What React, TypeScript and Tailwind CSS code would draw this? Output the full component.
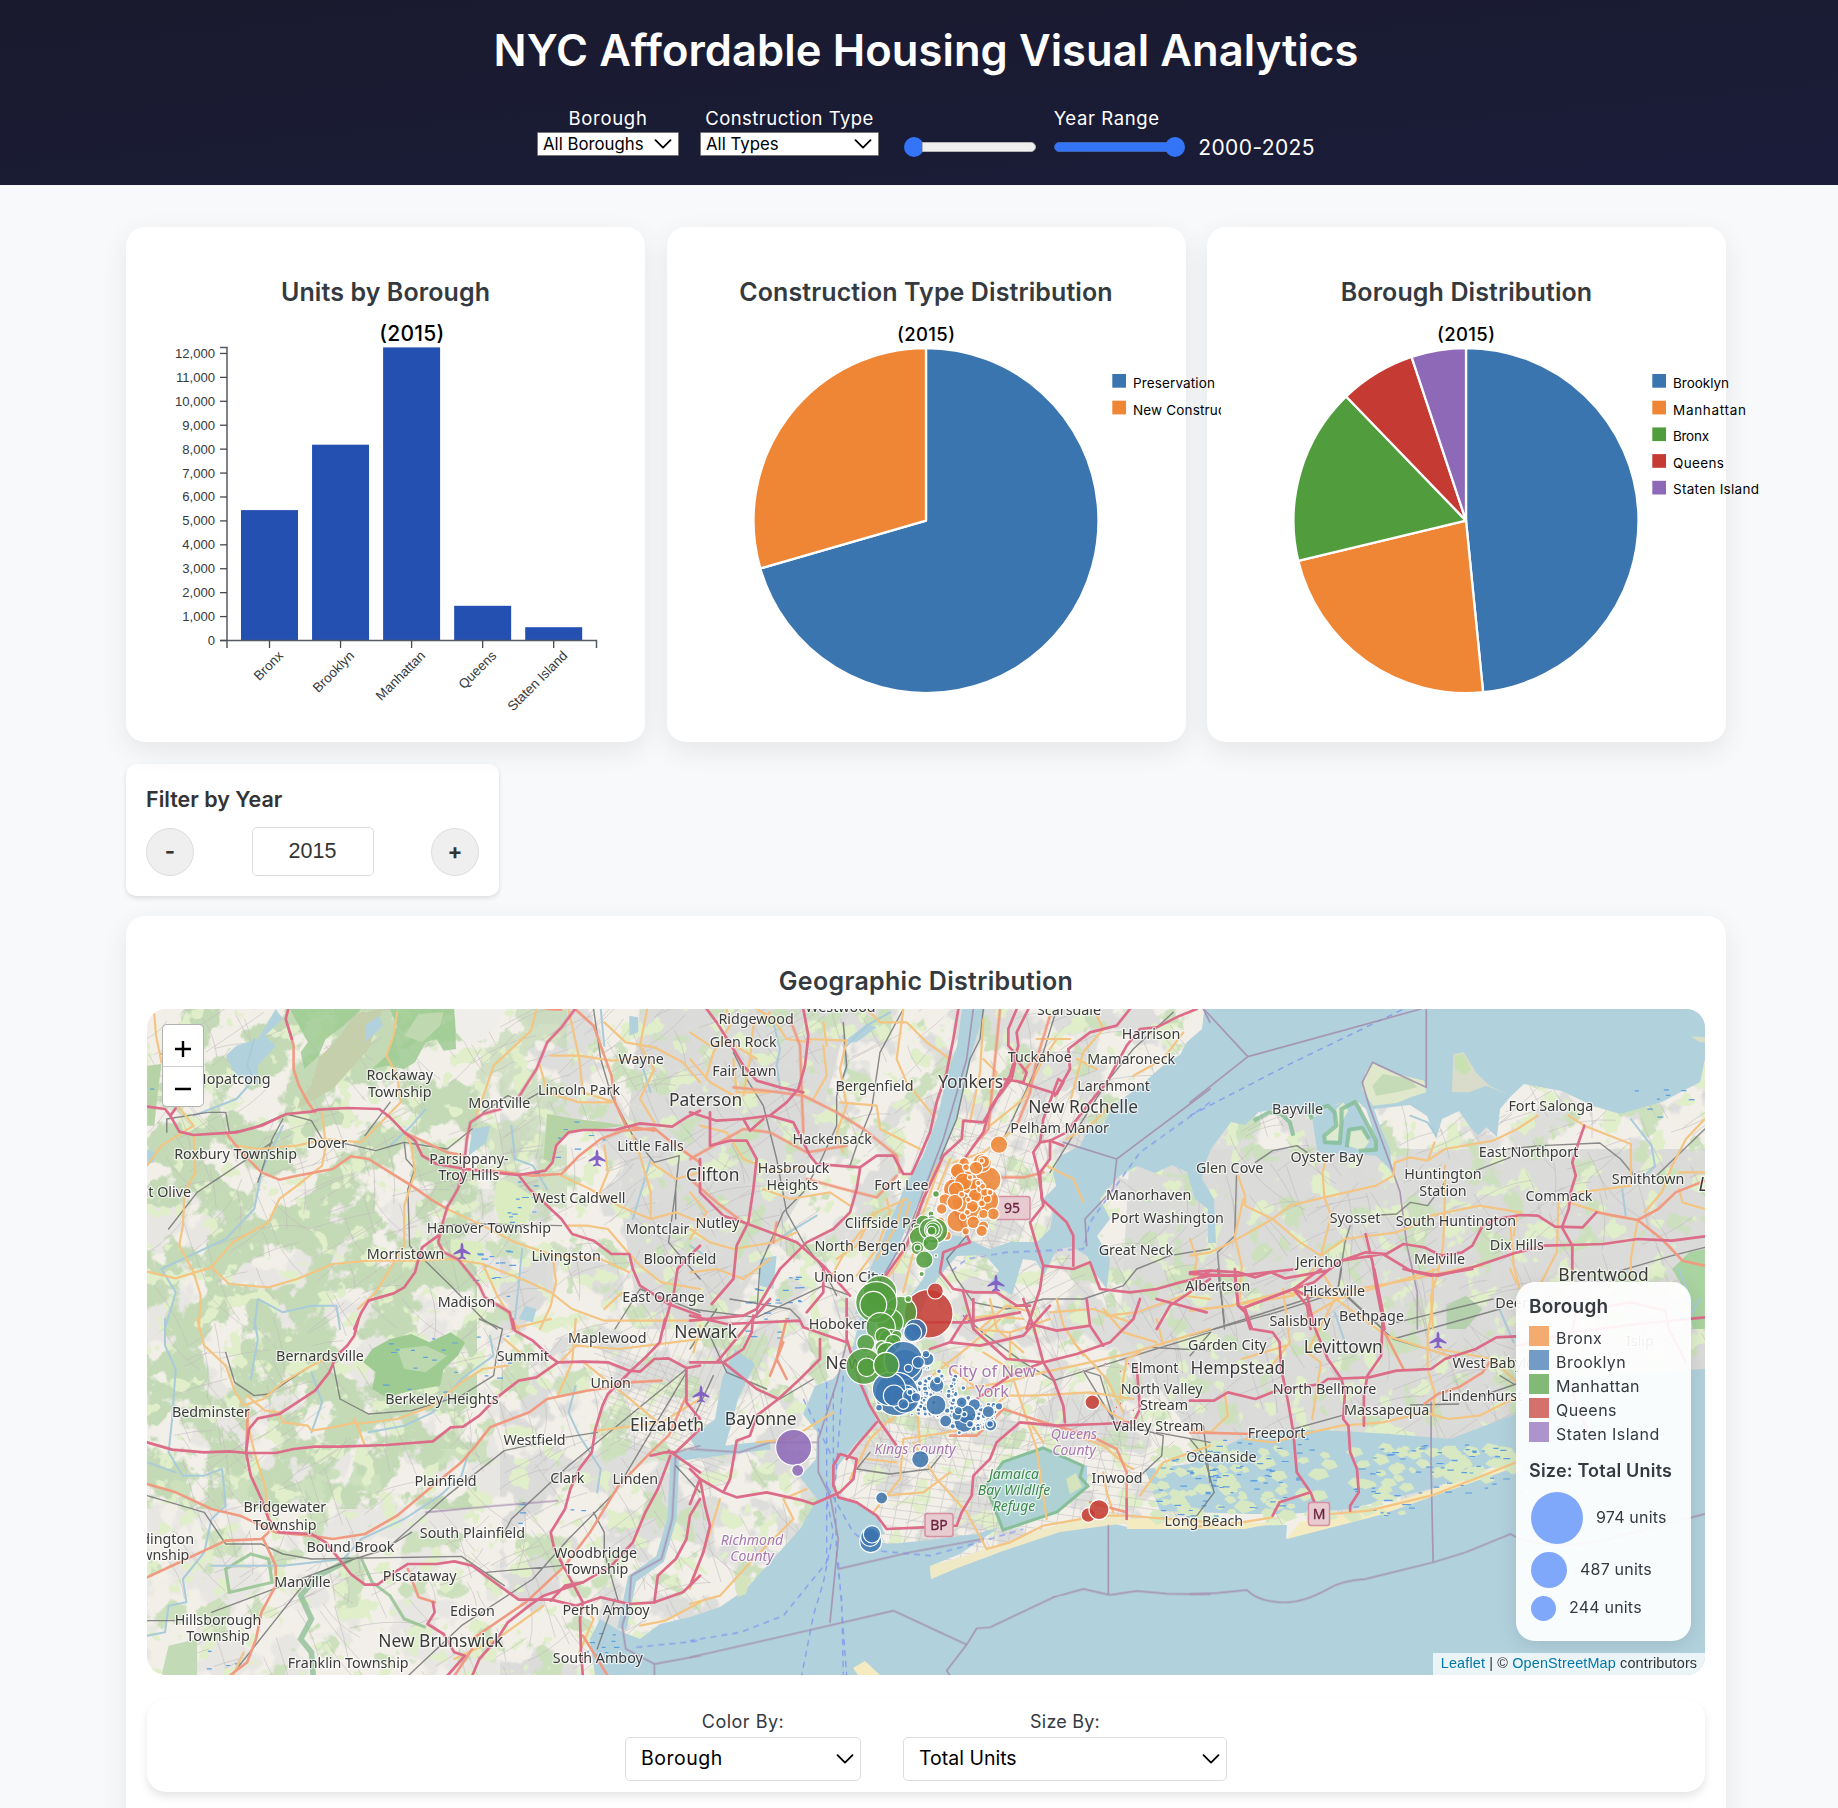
import React from "react";

type Section = "nw" | "sw" | "n" | "s" | "ne" | "se";
type Paths = [Section, string][];

const ORIGIN: Record<Section, string> = {
  nw: "translate(140 960) scale(.357143 .333333)",
  sw: "translate(140 1320) scale(.357143 .333333)",
  n: "translate(690 960) scale(.333333)",
  s: "translate(690 1300) scale(.333333)",
  ne: "translate(1190 960) scale(.344388 .333333)",
  se: "translate(1190 1270) scale(.344388 .333333)",
};

const motorways: Paths = [
  ["nw", "M415 150L408 180L425 240"],
  ["nw", "M20 443L70 450L85 470L110 518L150 528L210 524L270 520L340 500L410 465L480 458L500 452L580 447L670 450L700 475L740 520L770 545L790 590L830 615L910 630L1000 642L1060 648L1135 635L1155 610L1165 560L1200 520L1240 513L1330 513L1400 493L1490 503L1530 475L1568 455"],
  ["nw", "M1218 150L1180 205L1140 250L1110 330L1080 380L1060 415M1010 450L960 465L925 490L915 540L910 590L905 640L890 690L860 745L845 800L835 850L850 880L890 900L920 940L950 980L965 1015L1035 1060L1045 1110"],
  ["nw", "M835 830L790 865L780 900L770 940L740 985L710 1003L640 1025L620 1060L600 1110"],
  ["nw", "M1060 648L1090 690L1130 730L1180 780L1210 825L1270 845L1320 885L1370 885L1380 930L1400 980L1480 1035L1568 1070M1568 860L1530 900L1505 930L1495 1000L1465 1110"],
  ["nw", "M85 470L100 448"],
  ["sw", "M612 0L600 50L580 80L550 110L530 160L490 215L440 250L390 285L330 298L305 330L297 400L310 470L340 540L360 600L390 640L480 645L520 670L550 710L590 765L630 797L665 797L720 755L750 735L830 735L880 727L930 740L980 780L1060 842L1150 842L1220 860L1290 835L1370 855L1440 850L1520 820L1568 770"],
  ["sw", "M20 370L90 392L180 400L250 397L300 402L380 402L430 390L490 383L560 383L690 378L820 367L870 325L905 323L950 290L1000 235L1060 185L1110 175L1170 130L1240 128L1310 130L1370 155L1400 158L1440 120L1480 118L1530 147L1568 140"],
  ["sw", "M1043 0L1050 35L1100 65L1150 115L1170 130M1470 0L1455 70L1420 110L1380 150L1310 225L1295 260L1275 330L1265 400L1230 450L1205 510L1190 570L1150 640L1160 690L1190 750L1215 800L1240 850L1232 900L1235 1000L1240 1071"],
  ["sw", "M1568 330L1500 400L1470 400L1430 410M1485 410L1450 510L1415 580L1380 670L1320 740L1240 790L1130 830L1090 860L1030 910L1000 960L950 1020L930 1071M1568 540L1540 590L1530 660L1500 720L1450 770L1440 850M820 850L825 880L805 915L850 945L880 1000L910 1010L860 1071M1530 150L1530 250L1568 300"],
  ["sw", "M1150 845L1190 800L1240 790M1480 395L1568 460"],
  ["n", "M50 150L80 190L130 270L160 320L200 365L270 385L340 400M340 150L355 230L345 320L325 390L290 430L240 470L160 480L80 485L0 460M240 470L310 490L340 550L360 590L380 615L440 620L510 625L560 590L610 590L640 645L665 645L690 590L720 520L740 430L770 340L790 240L805 150"],
  ["n", "M510 630L500 690L480 760L430 810L350 850L270 930L200 1050L160 1070L0 1085M30 600L30 700L100 770L160 790L240 820L320 850L400 920L480 1010M400 920L400 1000L350 1060M60 460L60 560L120 545L170 545L200 600L190 690L175 790L140 860L130 960L65 1035M160 480L180 515L220 480"],
  ["n", "M980 150L955 210L955 260L980 290L965 360L920 420L880 490L820 485L815 540L760 590L700 720L650 860L580 960M1015 150L980 220L985 260L960 350L900 450L880 520L830 590L790 650L770 700L840 850L810 860L760 880L750 940L790 990L850 1000L920 1000L980 1040L1020 1040M990 370L1100 405L1120 370L1105 360L1060 480L1050 550L1080 545L1120 560M1050 550L1030 580L1045 640L1060 740L1020 790L1040 860L1060 920L1150 930L1200 910L1230 990L1320 1000L1400 990L1470 970L1560 950"],
  ["n", "M940 360L1000 370L1010 340L970 290M1135 270L1140 330L1095 410M1135 270L1200 220L1280 200L1320 150M1520 150L1470 170L1400 205L1350 210L1310 260L1250 370L1200 430L1130 520L1080 545L1080 600L1050 640L1055 720L1130 790L1150 830L1150 920M820 1000L850 1110M1060 920L1050 990L1010 1110M1400 1110L1440 1040L1560 960M700 1090L830 1090L990 1060"],
  ["s", "M0 50L110 75L330 65L340 85L470 130M0 190L100 190L160 150L185 100L190 50M390 120L390 180L330 240L265 300L200 270L100 190M240 0L180 70L80 190M265 300L200 350L180 410L140 425L120 540L100 580L30 540L0 510M100 580L140 595L230 580L340 605L370 615L450 580L490 540L500 480L450 465L430 500L430 560L445 595L500 610L560 650L590 690L700 685L800 680L815 640L845 590L850 530L900 480L920 430L990 370L1100 380L1230 375L1330 370"],
  ["s", "M470 0L470 120L510 250L540 320L570 370L620 440M560 370L500 440L470 480M850 0L850 90L950 180L1060 190L1160 165L1260 130L1330 60L1350 0M780 130L870 140L1000 110L1080 20M1190 0L1200 80L1240 140M1000 0L1030 80L1060 190L1090 240L1120 320L1125 370M1310 600L1310 660M0 860L40 760L60 680L45 620L30 540L0 615M1550 40L1400 0M720 150L780 130L830 50"],
  ["s", "M1020 75L1100 95L1200 80M1330 370L1350 330L1340 200M860 300L960 230L1060 190"],
  ["ne", "M0 940L60 935L140 940L190 955L235 940L275 958L400 935L440 905L510 880L570 885L620 855L680 865L730 890L790 880L820 860L850 800L890 780L960 768L1010 770L1060 803L1140 805L1180 760M440 905L560 885L640 935L720 950L820 925L950 880L1030 860L1100 858L1200 855L1300 840L1400 845L1495 832M1145 500L1125 560L1110 610L1120 650L1105 700L1100 750L1080 805L1110 860L1110 960M510 825L530 910L540 980L565 1110M20 960L60 935M40 950L130 950L140 1040L160 1060L175 1110M160 1045L300 990L360 970L400 935M300 990L340 1040L350 1110"],
  ["se", "M0 15L140 20L310 0M130 0L140 110L160 120L180 180L240 190L260 220L265 300L285 400L300 490L310 610L350 670L365 710M160 115L300 60L380 0M300 60L340 80L360 170L400 270L440 330L450 370L445 450L460 470L465 550L485 600L490 670L465 710L465 725M535 0L560 130L555 260L515 320L505 380L505 470M0 395L70 395L110 370L190 390L250 365L380 345L400 330L520 325L600 305L700 300L740 270L830 240L890 205L947 202M350 670L260 700L240 740M620 0L700 20L820 0M1110 190L1120 130L1280 100L1380 125L1390 180L1440 280M1100 330L1120 400L1160 500M950 230L1110 190L1300 165L1495 145"],
];

const primaries: Paths = [
  ["nw", "M420 220L430 260L430 330L445 380L470 430L490 460M240 520L280 575L340 640L390 662L440 650L540 630L590 592L640 600L700 640L760 680L820 725L860 750M740 520L800 550L860 580L910 590M910 630L1000 637L1100 650L1180 645L1230 590L1290 540L1350 515L1440 508L1500 560L1568 610M1218 150L1270 200L1300 290L1320 350L1330 430L1360 500L1440 515M1140 150L1180 152"],
  ["sw", "M20 495L100 520L200 570L280 590L340 620L380 640L480 650L540 660L630 645L720 590L820 500L900 430L940 380L980 325L1040 300L1090 280L1140 240L1250 215L1320 205L1370 190L1460 185M20 775L100 735L240 665L340 660L360 640M345 660L380 740L380 800L340 880L325 960L300 1030L250 1071M750 750L780 835L825 850M930 960L1080 850L1190 740L1260 640L1340 500L1430 400L1480 350L1530 230M880 1071L930 990M1240 950L1310 1071M297 400L302 270"],
  ["n", "M300 180L330 260L335 400L340 520M130 385L230 395L340 410L440 460L520 510L620 590L630 640M0 600L160 510L240 520L350 580L470 560M0 660L80 730L160 790M350 660L460 690L560 715L620 650M930 150L915 300L895 510L850 560M930 655L1000 655L1060 640M1030 300L1000 340M1080 170L1040 300L1020 400L980 500M250 850L260 790"],
  ["s", "M780 410L860 410L940 330L1060 370L1200 410L1280 450L1310 520L1310 600M240 230L280 130M1200 610L1310 640M290 60L260 180L290 240"],
  ["ne", "M1180 760L1300 783L1360 750L1410 700L1495 665M1300 783L1370 840L1430 905L1495 920"],
  ["se", "M565 190L620 300M680 405L720 375L780 355L850 310L870 280M0 490L180 495"],
];

const secondaries: Paths = [
  ["nw", "M40 165L45 230L60 310M150 500L60 560L20 620M150 500L120 460L100 430M150 530L155 640L125 700L120 800L110 860L150 940L170 1010L165 1110M20 938L100 958L200 925L260 850L360 790L390 720L440 680L510 620L520 560L510 460M200 925L250 975L360 985L440 960L540 915L640 905L780 905M720 160L710 230L690 290L720 350L730 430L620 550L520 540L440 560L330 570L270 560M740 520L760 560L770 640L740 740L740 860L660 1000L610 1050M1110 150L1095 215L1050 260L990 320L965 400L940 470M1200 150L1230 300L1240 400L1330 430M1300 190L1360 250L1440 265L1520 310L1568 370M1150 290L1230 290L1320 305L1420 295M1120 320L1140 400L1230 430L1320 430M870 900L960 915L1080 965L1150 1000L1210 1050L1300 1085L1420 1085L1568 1085M860 750L960 800L1050 850L1160 890L1290 900L1370 940M1180 650L1260 690L1340 740L1430 780L1430 700L1400 590L1380 530M1200 800L1250 800L1310 810L1350 860L1400 920L1460 970L1568 990M1155 890L1165 970L1150 1040L1120 1110M960 915L1000 1010L1060 1110"],
  ["nw", "M1420 150L1400 260L1440 330L1400 420L1440 490M1300 560L1310 640L1280 720M1430 780L1500 760L1568 790M1350 1000L1300 1050M780 905L880 900M1430 610L1500 660L1568 640"],
  ["sw", "M160 0L180 80L240 140L265 215L290 260L345 240L400 190L480 140L520 120M300 230L350 275L390 280L400 310L470 320L480 335L540 325L605 310L630 380M605 315L720 300L820 260L900 190L960 150L1030 140M630 380L600 300M300 300L320 400L350 500L360 600M1020 60L1080 115M1040 30L1150 0M1180 125L1220 80L1340 90L1568 60M1240 128L1360 230L1450 310M1280 335L1460 310L1568 240M1240 860L1270 900L1230 1000M1400 920L1470 905L1568 850M880 1020L1000 960L1130 860M1550 100L1568 20M290 1000L260 1071M1220 0L1210 130L1170 230"],
  ["n", "M110 150L120 200L70 280L50 350M130 300L140 400L240 400M240 160L190 200L180 300L160 410M350 240L470 245L450 330L470 440L440 520L460 580M450 430L560 440L570 510L690 570M530 150L570 190L650 190L710 250L780 300M640 150L620 300L650 370L730 470M0 300L60 370L150 420M400 260L410 350L370 420M0 810L60 850L130 870L250 850L320 820M0 700L50 760L0 840M590 720L600 760L560 870L500 950M660 730L640 800M650 720L560 760L470 870L420 960M880 180L870 340L840 490M1100 240L1060 300L1000 420L900 500M1040 240L1140 240M960 520L880 580L790 610M1070 620L1150 660L1180 730M1130 540L1200 500L1260 440M1210 150L1240 210L1180 280L1140 430M760 590L700 760L640 1000M780 600L740 700M1250 1070L1340 1060L1480 1010L1560 1020M1080 1060L1210 1050L1320 1090M870 1110L950 1040L1030 1060M1480 220L1420 300L1330 350M200 150L250 180L290 240L360 250"],
  ["n", "M0 220L60 260L120 250L200 300M30 500L110 520L160 600L260 640L340 620M220 690L300 720L420 700L480 740M640 720L620 800L560 900M680 800L620 920L560 1000M740 620L690 740M0 940L80 930L160 960L240 900M400 190L410 260M550 760L500 860L440 900M880 300L920 340L900 400M1160 300L1220 330"],
  ["s", "M1560 90L1330 160L1200 190L1060 220L940 250L820 270M640 420L740 405L830 390L950 290L1030 290L1200 280L1330 300M850 90L960 100L1080 60M880 160L960 210L1000 330L1040 450L1070 660M550 640L630 540L640 420M670 430L740 540L830 640L890 750M580 590L700 580L780 520M1270 640L1250 580L1240 520M890 750L960 730L1060 680L1230 650L1310 650L1560 670M1350 590L1420 490L1560 440M1060 430L1020 370M350 570L280 600L310 660L190 780L90 890L0 915M0 870L60 700L90 600M430 340L300 420L200 430M600 360L540 420L480 540M1160 410L1240 440L1310 500L1330 510M760 190L850 260M1200 280L1260 340L1330 380M1290 300L1310 180L1350 160M930 60L840 140L700 250L600 370M1150 130L1250 240L1300 340"],
  ["s", "M900 0L920 90L1000 160M1100 0L1120 80L1180 170M960 100L960 180M680 320L690 440M830 60L900 50L1000 60M1240 30L1300 100L1400 130M1400 60L1420 140M620 60L600 150L560 240M530 480L620 490"],
  ["ne", "M0 890L60 880L120 850L240 780L290 740L390 715L540 680L590 650L595 610L640 595L690 605L740 570L880 545L950 510L1010 470M390 715L385 640L395 600M390 715L410 770L380 890L450 840L600 820L650 800L700 770L840 740L960 760M140 650L160 710L160 740L240 780L320 850L380 890M155 720L130 830L150 920L145 1020M690 605L710 550M740 620L740 730L735 860L720 940L700 1010L705 1110M390 950L430 1020L330 1080M0 1055L120 1040L300 1010L380 900M430 1000L650 960L780 930L850 920M930 800L940 920L960 1000M1070 730L1065 880L1020 970M1100 730L1220 770L1300 783L1280 900L1280 960M950 760L940 830M1145 500L1280 555L1280 680L1130 700M1145 500L1100 470M1495 480L1440 540L1400 620L1370 700L1320 760M1420 640L1495 640M1420 690L1430 730L1495 750M0 840L20 900L10 960"],
  ["se", "M0 125L120 110L270 70L430 90L560 50L720 0M430 70L410 110L380 170L340 250L380 280L355 450M270 60L290 220L230 300M410 80L570 200L690 240L750 260M705 0L705 100L690 200L690 300L710 370L705 440M0 480L60 490L110 440L100 370M160 510L240 520L350 490L440 470L560 460L680 430L750 450L840 440L947 385M0 775L150 760L240 745M410 735L520 725L700 680L850 620L947 580M280 230L150 270M720 240L880 270L947 340M930 0L947 40"],
];

const rails: Paths = [
  ["nw", "M75 520L75 480L190 460L240 460L250 520M250 520L310 510L410 465L480 485L510 540L600 560L660 575L740 550L745 600L770 630L750 690L755 860L870 980L960 1080L1000 1110M80 810L160 700L370 550M330 670L370 540L400 480M740 550L860 570L930 510M960 460L1030 410L1070 430L1120 400M1270 150L1290 300L1320 410L1380 530L1440 610L1510 590L1500 690L1480 850L1568 960M840 800L950 795L1180 800M1500 690L1500 780M630 530L700 430M1330 1110L1400 990L1568 1060"],
  ["sw", "M240 100L265 190L320 230L360 225L450 160L480 140M540 130L560 240L640 285L760 275L900 230L990 170L1000 100L1015 30L950 0M20 530L180 580L240 675L340 675L400 705L480 720L900 712L1020 800M200 880L400 800L600 720L690 690L860 530L1020 395L1190 355M255 1071L440 820L480 770M750 1071L900 920L1100 780L1200 660L1330 520L1530 160M1020 640L1040 600L1200 440L1530 150M760 640L700 680M1270 580L1300 640L1300 700L1340 850M970 760L1180 740M1280 990L1330 840M20 905L100 905M1190 355L1280 340M1500 440L1568 520"],
  ["n", "M130 280L170 360L220 440L260 600L290 760L340 850L400 930L440 1010M460 190L470 320L440 410L440 500L390 610L340 700L280 760L210 920L200 1070M640 150L570 280L545 450L500 560L480 620M880 150L870 240L840 300L800 480L750 600M1100 150L1060 280L1010 390L940 540M1450 160L1330 270L1250 370L1130 560L1080 640M830 830L770 900L800 960L850 1030L950 1050L1060 1020L1180 1020L1300 980L1340 930L1440 890L1560 870M0 1050L200 1075L400 980L480 1010"],
  ["s", "M820 50L890 110L1000 190L1090 245L1560 100M1380 145L1560 155M1180 215L1280 380M1180 215L1230 230L1270 360M540 460L500 510L600 525L720 510L760 460M1280 380L1350 390L1420 410L1415 470L1340 540M1540 380L1560 550M70 230L0 380M0 150L80 30M370 240L270 300M60 110L110 220L230 270M1400 400L1560 430M120 0L300 30L330 60"],
  ["ne", "M190 610L240 575L310 560L340 580M135 650L130 830L80 880L100 1110M830 635L930 595M740 670L690 740L640 730L600 765L550 768M465 800L450 850L430 985M920 570L1020 560L1190 552L1250 600L1290 650M1350 655L1495 510M70 1110L340 1020L430 985L560 1110M1250 935L1400 890L1495 865M600 1090L880 1020"],
  ["se", "M0 200L250 130L400 80M0 260L60 190M430 60L590 210L900 120M590 210L770 265M900 320L940 345M300 480L440 440M640 408L780 405M820 390L947 345M0 510L40 560L70 670L20 740M80 0L100 160M440 0L430 60"],
];

const streams: Paths = [
  ["nw", "M320 240L300 320L320 360L270 420L150 470M400 500L340 640L320 750L240 840L60 930L100 1000L70 1110M800 450L760 500L700 560M1040 500L1050 600L1100 620L1140 690M1430 600L1380 780M560 1110L550 1040L480 1040L400 1060L330 1020L320 1110M1070 870L1060 980L1050 1080M1400 300L1430 400M1290 150L1300 260"],
  ["sw", "M70 0L70 80L100 150L90 300L80 400L120 470L180 470L230 450L240 560L200 600L180 700L120 780L130 850L80 860L70 940L20 950M320 0L330 60L310 180M980 50L990 110L900 180L820 280L740 320L640 340M920 400L900 470L840 530L740 600L620 660L570 720L400 740L200 740M1220 200L1200 280L1230 350L1290 450L1280 520M20 430L100 460M480 160L510 250L480 340"],
  ["n", "M250 190L270 270L260 320L270 380M460 230L470 330L440 400M470 260L530 200L600 160M380 770L330 800L250 850M0 860L60 900M820 650L850 700"],
  ["ne", "M640 470L690 490L715 530M1280 480L1340 560L1350 620L1310 660M1255 690L1265 770M1420 930L1460 1040"],
  ["se", "M890 100L940 220M420 130L450 220M1480 90L1440 170"],
];

const borders: Paths = [
  ["n", "M850 150L830 300L760 540L650 830L540 1020M1540 150L1560 190M1560 390L1280 600L1270 690L1185 780L1190 860M1280 600L1120 550"],
  ["s", "M470 130L440 250L385 420L385 520L420 590L445 720L420 970M0 1075L330 1000L610 935L830 1037L860 988L900 985L1090 895L1180 870L1260 888L1340 876L1430 884L1560 886M830 1037L770 1115L780 1130M445 810L660 760L880 720M1255 680L1255 885M0 450L150 460L240 430L380 430"],
  ["ne", "M40 150L168 293L670 150M168 293L0 430M686 150L686 385L530 310L500 370L520 440L555 540L580 610L610 700L630 860L660 1000L660 1110"],
  ["se", "M700 400L700 600L706 880M0 975L80 972L165 963Q200 1000 275 1000Q330 1000 400 960Q440 935 510 930L706 880L800 850L930 795L960 810Q1090 850 1250 800L1495 735"],
  ["sw", "M1568 380L1500 400L1490 600L1460 720L1375 770L1370 850L1350 920L1360 990L1440 1035L1568 1010M800 580L1000 560L1170 545M1440 1040L1440 1071"],
];

const ferries: Paths = [
  ["s", "M410 250L410 790L280 950L150 1000L0 1025M430 280L430 560L410 600L430 700L400 850L370 950L335 1130M460 230L435 560L440 780L455 900L460 1130M410 560L490 700L560 755L720 770L830 740L1000 690M445 790L470 1130M340 300L440 500"],
  ["n", "M1560 430L1350 580L1200 790L1180 870L950 880L830 900L780 940"],
  ["ne", "M0 470L280 320L500 210L620 150"],
  ["sw", "M1390 985L1568 965"],
];

function Lines({ data, stroke, width, dash, opacity = 1 }: { data: Paths; stroke: string; width: number; dash?: string; opacity?: number }) {
  return (
    <g fill="none" stroke={stroke} strokeWidth={width} strokeDasharray={dash} strokeLinejoin="round" strokeLinecap={dash ? "butt" : "round"} opacity={opacity}>
      {data.map(([section, d], i) => (
        <path key={i} d={d} transform={ORIGIN[section]} vectorEffect="non-scaling-stroke" />
      ))}
    </g>
  );
}

function seeded(seed: number) {
  let s = seed;
  return () => {
    s = (s * 1664525 + 1013904223) % 4294967296;
    return s / 4294967296;
  };
}

const streets = (() => {
  const rnd = seeded(11);
  let d = "";
  for (let i = 0; i < 1300; i++) {
    const x = 147 + rnd() * 1558;
    const y = 1010 + rnd() * 666;
    const a = (rnd() > 0.5 ? 1.1 : -0.5) + (rnd() - 0.5) * 0.5;
    const l = 12 + rnd() * 24;
    const b = a + (rnd() - 0.5) * 1.2;
    const x2 = x + Math.cos(a) * l;
    const y2 = y + Math.sin(a) * l;
    d += `M${x.toFixed(1)} ${y.toFixed(1)}Q${x2.toFixed(1)} ${y2.toFixed(1)} ${(x2 + Math.cos(b) * l).toFixed(1)} ${(y2 + Math.sin(b) * l).toFixed(1)}`;
  }
  return d;
})();

const cityGrid = (() => {
  let d = "";
  for (let i = 0; i < 22; i++) {
    d += `M${860 + i * 14} ${1330 + i * 4}l-40 190M${840 + i * 3} ${1400 + i * 9}l300 40`;
  }
  for (let i = 0; i < 14; i++) {
    d += `M${940 + i * 12} 1090l-60 170M${930 - i * 3} ${1110 + i * 11}l110 34`;
  }
  for (let i = 0; i < 16; i++) d += `M${640 + i * 9} 1330l-50 110M${590 + i * 2} ${1340 + i * 7}l110 40`;
  return d;
})();

const MARSH: [number, number, number, number, number][] = [
  [498, 1170, 40, 60, 14], [150, 1050, 60, 60, 8], [470, 1250, 40, 50, 14], [380, 1335, 80, 60, 14], [550, 1120, 60, 40, 8],
  [745, 1270, 60, 70, 24], [1155, 1450, 65, 70, 34], [1200, 1440, 110, 70, 44], [1350, 1450, 60, 70, 26], [1410, 1445, 110, 50, 36], [580, 1630, 40, 30, 10],
  [1630, 1090, 60, 30, 8], [205, 1650, 40, 20, 4], [470, 1320, 60, 60, 6], [490, 1500, 100, 30, 6],
];
const marsh = (() => {
  const rnd = seeded(5);
  let d = "";
  for (const [x, y, w, h, n] of MARSH)
    for (let i = 0; i < n; i++) d += `M${(x + rnd() * w).toFixed(1)} ${(y + rnd() * h).toFixed(1)}h${(3 + rnd() * 4).toFixed(1)}`;
  return d;
})();
const wetlands = (() => {
  const rnd = seeded(23);
  const out: string[] = [];
  const zones = [[1150, 1445, 180, 75, 90], [1350, 1445, 62, 75, 26], [1412, 1450, 104, 30, 30]];
  for (const [x, y, w, h, n] of zones)
    for (let i = 0; i < n; i++) {
      const cx = x + rnd() * w;
      const cy = y + rnd() * h;
      const a = 4 + rnd() * 7;
      out.push(`M${(cx - a).toFixed(1)} ${cy.toFixed(1)}l${(a * 0.6).toFixed(1)} ${(-a * 0.6).toFixed(1)}l${a.toFixed(1)} ${(rnd() * 3).toFixed(1)}l${(a * 0.4).toFixed(1)} ${(a * 0.7).toFixed(1)}l${(-a * 1.1).toFixed(1)} ${(a * 0.4).toFixed(1)}z`);
    }
  return out.join("");
})();

/* Label anchor points on a 1568-wide base sheet. */
const SHEET = 1838 / 1568;
type Label = [string, number, number];
const towns: Label[] = [
  ["Hopatcong", 199, 922], ["Rockaway", 341, 918], ["Township", 341, 933], ["Montville", 426, 942], ["Lincoln Park", 494, 931],
  ["Wayne", 547, 905], ["Dover", 279, 976], ["Roxbury Township", 201, 986], ["Parsippany-", 400, 990], ["Troy Hills", 400, 1004],
  ["nt Olive", 141, 1018], ["West Caldwell", 494, 1023], ["Hanover Township", 417, 1049], ["Morristown", 346, 1071], ["Livingston", 483, 1073],
  ["Montclair", 561, 1050], ["Bloomfield", 580, 1075], ["East Orange", 566, 1108], ["Madison", 398, 1112], ["Little Falls", 555, 979],
  ["Bernardsville", 273, 1158], ["Maplewood", 518, 1143], ["Summit", 446, 1158], ["Union", 521, 1181], ["Berkeley Heights", 377, 1195],
  ["Bedminster", 180, 1206], ["Westfield", 456, 1230], ["Clark", 484, 1262], ["Linden", 542, 1263], ["Plainfield", 380, 1265],
  ["Bridgewater", 243, 1287], ["Township", 243, 1302], ["South Plainfield", 403, 1309], ["Bound Brook", 299, 1321], ["Woodbridge", 508, 1326],
  ["Township", 509, 1340], ["Piscataway", 358, 1346], ["Manville", 258, 1351], ["Edison", 403, 1376], ["Perth Amboy", 517, 1375],
  ["Hillsborough", 186, 1383], ["Township", 186, 1397], ["Franklin Township", 297, 1420], ["South Amboy", 510, 1416], ["dington", 143, 1314], ["wnship", 141, 1328],
  ["Westwood", 717, 860], ["Ridgewood", 645, 871], ["Glen Rock", 634, 890], ["Fair Lawn", 635, 915], ["Bergenfield", 746, 928],
  ["Hackensack", 710, 973], ["Hasbrouck", 677, 998], ["Heights", 676, 1012], ["Fort Lee", 769, 1012], ["Nutley", 612, 1045],
  ["Cliffside Park", 758, 1045], ["North Bergen", 734, 1064], ["Union City", 724, 1091], ["Hoboken", 716, 1131],
  ["Scarsdale", 912, 863], ["Harrison", 982, 883], ["Tuckahoe", 887, 903], ["Mamaroneck", 965, 905], ["Larchmont", 950, 928],
  ["Pelham Manor", 904, 964], ["Manorhaven", 980, 1021], ["Port Washington", 996, 1040], ["Great Neck", 969, 1068], ["Glen Cove", 1049, 998],
  ["Bayville", 1107, 947], ["Oyster Bay", 1132, 988], ["Fort Salonga", 1323, 945], ["East Northport", 1304, 984], ["Huntington", 1231, 1003],
  ["Station", 1231, 1017], ["Smithtown", 1406, 1007], ["Commack", 1330, 1022], ["Syosset", 1156, 1040], ["South Huntington", 1242, 1043],
  ["Dix Hills", 1294, 1063], ["Jericho", 1125, 1078], ["Melville", 1228, 1075], ["Albertson", 1039, 1098], ["Hicksville", 1138, 1103],
  ["Salisbury", 1109, 1128], ["Bethpage", 1170, 1124], ["Deer Park", 1304, 1113], ["Garden City", 1047, 1149], ["West Babylon", 1278, 1164],
  ["Elmont", 985, 1168], ["North Valley", 991, 1186], ["Stream", 993, 1200], ["North Bellmore", 1130, 1186], ["Lindenhurst", 1264, 1192],
  ["Massapequa", 1183, 1204], ["Valley Stream", 988, 1218], ["Freeport", 1089, 1224], ["Oceanside", 1042, 1244], ["Inwood", 953, 1262], ["Long Beach", 1027, 1299],
  ["Islip", 1399, 1145],
];
const cities: Label[] = [
  ["Paterson", 602, 940], ["Clifton", 608, 1004], ["Newark", 602, 1138], ["Elizabeth", 569, 1217], ["New Brunswick", 376, 1401],
  ["Yonkers", 828, 924], ["New Rochelle", 924, 946], ["Bayonne", 649, 1212], ["Hempstead", 1056, 1168], ["Levittown", 1146, 1150], ["Brentwood", 1368, 1089],
];

type Dot = [number, number, number];
const bronxDots: Dot[] = [
  [770, 830, 14], [750, 790, 16], [893, 662, 40], [890, 725, 36], [805, 785, 34], [840, 700, 32], [810, 640, 28], [830, 670, 34], [815, 730, 30], [850, 760, 26],
  [927, 557, 26], [876, 612, 28], [880, 608, 19], [875, 605, 8], [822, 612, 16], [803, 635, 22],
  [858, 627, 20], [828, 625, 10], [860, 680, 22], [790, 690, 30], [820, 668, 26], [798, 692, 23], [855, 710, 20], [765, 722, 18], [795, 730, 24], [755, 750, 16],
  [847, 742, 18], [876, 733, 10], [892, 720, 12], [910, 765, 18], [870, 772, 8], [880, 765, 14], [850, 790, 19], [819, 773, 11], [880, 802, 16], [875, 816, 17], [827, 817, 11],
  [870, 690, 10], [815, 706, 9], [840, 655, 8], [832, 760, 9], [884, 700, 12], [878, 682, 9], [865, 672, 8], [900, 700, 9], [835, 722, 8],
];
const manhattanDots: Dot[] = [
  [738, 705, 10], [723, 765, 9], [700, 790, 22], [680, 805, 10], [690, 835, 32], [726, 782, 12], [735, 815, 38], [720, 810, 32], [730, 812, 27], [728, 812, 20], [725, 815, 13], [722, 853, 23],
  [682, 868, 19], [683, 866, 10], [703, 902, 26], [738, 890, 5], [695, 945, 8], [570, 1000, 50], [632, 1060, 48], [655, 1020, 10], [600, 1090, 40], [559, 1030, 62], [550, 1037, 40],
  [572, 1105, 44], [600, 1145, 34], [620, 1130, 16], [579, 1130, 24], [527, 1153, 27], [610, 1150, 24], [575, 1165, 20], [590, 1180, 30], [522, 1222, 54], [530, 1225, 28], [589, 1218, 38],
];
const queensDots: Dot[] = [[716, 1064, 73], [736, 996, 24], [1207, 310, 22], [1195, 648, 22], [1227, 632, 30]];
const brooklynDots: Dot[] = [
  [677, 93, 33], [668, 101, 27], [645, 205, 54], [640, 185, 58], [655, 208, 12], [712, 180, 20], [708, 165, 11], [685, 190, 18], [620, 285, 65], [645, 300, 42], [597, 270, 50], [612, 290, 32],
  [660, 290, 22], [678, 295, 14], [640, 315, 16], [567, 326, 10], [740, 258, 22], [742, 243, 11], [738, 318, 30], [853, 317, 18], [822, 370, 30], [830, 346, 28], [767, 366, 18],
  [800, 350, 14], [823, 346, 8], [902, 378, 18], [900, 375, 10], [895, 338, 18], [927, 322, 11], [788, 382, 8], [808, 401, 6], [660, 280, 9], [691, 481, 26], [575, 597, 18],
  [542, 728, 33], [540, 714, 28], [546, 706, 26], [820, 267, 7], [792, 242, 7], [747, 217, 7], [815, 310, 16], [805, 335, 12], [840, 375, 10],
];
const brooklynSpecks: Dot[] = (() => {
  const rnd = seeded(77);
  const out: Dot[] = [];
  const zones = [[655, 245, 60, 80, 34], [700, 230, 100, 60, 36], [770, 290, 70, 60, 34], [660, 310, 90, 45, 16], [850, 315, 65, 70, 40], [690, 160, 40, 50, 10], [775, 355, 90, 35, 16]];
  for (const [x, y, w, h, n] of zones) for (let i = 0; i < n; i++) out.push([x + rnd() * w, y + rnd() * h, 3 + rnd() * 5.5]);
  return out;
})();

function Dots({ data, fill, section }: { data: Dot[]; fill: string; section: "n" | "s" }) {
  return (
    <g transform={ORIGIN[section]} fill={fill} fillOpacity={0.86} stroke="#fff" strokeWidth={3.5}>
      {data.map(([x, y, r], i) => (
        <circle key={i} cx={x} cy={y} r={r} />
      ))}
    </g>
  );
}

const Plane = ({ x, y }: { x: number; y: number }) => (
  <path transform={`translate(${x} ${y})`} fill="#8461c4" d="M0-8.5q1.4 1 1.4 3.5v2.6l7 4.6v1.6l-7-2v3.6l2.6 2v1.2L0 7.6l-4 1V7.4l2.6-2V1.8l-7 2V2.200l7-4.600V-5q0-2.500 1.400-3.500z" />
);

const Shield = ({ x, y, w, text }: { x: number; y: number; w: number; text: string }) => (
  <g>
    <rect x={x - w / 2} y={y - 11.500} width={w} height={23} rx={2.500} fill="#e8cbd1" stroke="#d68fa1" strokeWidth={1.500} />
    <text x={x} y={y + 5} textAnchor="middle" fontSize={14} fill="#6b2540" stroke="#6b2540" strokeWidth={0.300}>{text}</text>
  </g>
);

const SOUND =
  "M1205 1005L1202 1030L1187 1043L1180 1056L1167 1063L1140 1087L1113 1107L1104 1124L1090 1127L1080 1147L1060 1157L1053 1173L1056 1187L1043 1200L1053 1213L1050 1230L1037 1243L1010 1243L990 1250L960 1237L943 1237L930 1253L923 1280L910 1297L900 1330L908 1345L922 1310L937 1280L957 1257L985 1256L999 1272L990 1284L1012 1296L1023 1260L1036 1262L1044 1276L1057 1250L1072 1248L1087 1257L1096 1275L1107 1290L1110 1260L1097 1237L1110 1220L1100 1200L1118 1178L1137 1167L1155 1174L1172 1166L1187 1173L1195 1200L1208 1210L1208 1244L1216 1244L1214 1200L1202 1180L1205 1165L1211 1150L1231 1123L1245 1126L1259 1113L1290 1108L1312 1118L1331 1107L1341 1104L1340 1125L1330 1135L1332 1142L1342 1140L1344 1120L1355 1100L1366 1110L1376 1140L1372 1150L1385 1162L1392 1175L1390 1150L1381 1130L1374 1110L1410 1106L1427 1117L1436 1140L1442 1120L1459 1112L1470 1128L1478 1137L1486 1128L1497 1138L1500 1110L1510 1098L1524 1085L1562 1092L1593 1107L1620 1115L1662 1103L1700 1083L1705 1060V1005Z";
const OCEAN =
  "M600 1676L615 1655L640 1640L660 1625L690 1618L720 1608L746 1590L773 1560L800 1530L813 1507L817 1500L800 1478L816 1460L817 1433L803 1415L815 1387L833 1380L850 1360L862 1310L880 1310L868 1350L860 1378L867 1390L872 1412L877 1423L855 1445L838 1467L833 1497L856 1503L877 1517L885 1535L862 1540L890 1545L930 1541L975 1535L1000 1528L960 1555L930 1567L931 1580L960 1567L990 1557L1043 1534L1100 1521L1127 1528L1190 1530L1242 1527L1287 1526L1286 1540L1330 1523L1370 1514L1432 1497L1483 1477L1516 1465L1705 1418V1680H600Z";

function MapCanvas() {
  return (
    <svg viewBox="147 1010 1558 666" className="block h-full w-full" fontFamily='"Noto Sans", sans-serif'>
      <defs>
        <filter id="forest" x="0" y="0" width="100%" height="100%" colorInterpolationFilters="sRGB">
          <feTurbulence type="fractalNoise" baseFrequency="0.024" numOctaves={5} seed={4} />
          <feColorMatrix values="0 0 0 0 .767  0 0 0 0 .855  0 0 0 0 .715  16 0 0 0 -7.100" />
        </filter>
        <filter id="meadow" x="0" y="0" width="100%" height="100%" colorInterpolationFilters="sRGB">
          <feTurbulence type="fractalNoise" baseFrequency="0.045" numOctaves={3} seed={9} />
          <feColorMatrix values="0 0 0 0 .878  0 0 0 0 .933  0 0 0 0 .792  0 20 0 0 -12.300" />
        </filter>
        <filter id="built" x="0" y="0" width="100%" height="100%" colorInterpolationFilters="sRGB">
          <feTurbulence type="fractalNoise" baseFrequency="0.02" numOctaves={4} seed={17} />
          <feColorMatrix values="0 0 0 0 .856  0 0 0 0 .856  0 0 0 0 .852  18 0 0 0 -9" />
        </filter>
        <filter id="park" x="0" y="0" width="100%" height="100%" colorInterpolationFilters="sRGB">
          <feTurbulence type="fractalNoise" baseFrequency="0.03" numOctaves={4} seed={31} />
          <feColorMatrix values="0 0 0 0 .8  0 0 0 0 .88  0 0 0 0 .74  18 0 0 0 -10.900" />
        </filter>
      </defs>
      <rect x="147" y="1010" width="1558" height="666" fill="#f2efe9" />
      <path d="M640 1010H850L800 1200L720 1330L640 1330L620 1200ZM1130 1150H1705V1450H1200L1120 1330Z" fill="#dbdbd9" />
      <rect x="500" y="1010" width="1205" height="666" filter="url(#built)" opacity=".85" />
      <rect x="147" y="1190" width="400" height="486" filter="url(#built)" opacity=".4" />
      <rect x="147" y="1010" width="330" height="500" filter="url(#forest)" />
      <rect x="477" y="1010" width="90" height="250" filter="url(#forest)" opacity=".7" />
      <rect x="477" y="1010" width="1228" height="440" filter="url(#park)" />
      <rect x="147" y="1450" width="700" height="226" filter="url(#park)" />
      <rect x="147" y="1010" width="1558" height="666" filter="url(#meadow)" />
      <path d={streets} fill="none" stroke="#bdb9bb" strokeWidth={0.9} opacity={0.6} />
      <path d={cityGrid} fill="none" stroke="#c4c1c1" strokeWidth={0.8} opacity={0.7} />

      {/* Protected areas */}
      <g transform={ORIGIN.nw}>
        <path d="M600 165L680 150L640 270L540 390L440 450L450 420L480 380L500 300L560 230Z" fill="#c6cfac" />
        <path d="M420 150L620 150L570 200L520 240L500 290L460 330L450 280L470 250L440 190ZM700 150H880L885 270L850 275L830 240L800 250L770 310L740 330L690 320L650 330L690 290L720 200Z" fill="#9ecb92" opacity=".85" />
        <path d="M780 165L850 160L840 200L790 250L740 230Z" fill="#bfd8b0" />
        <path d="M20 320L60 315L50 400L40 500H20ZM1140 465L1220 480L1300 490L1360 500L1200 520L1160 560L1150 610L1130 600Z" fill="#b5d3a4" />
        <path d="M880 150H1030L960 240L920 260L885 220Z" fill="#f0eeea" />
        <path d="M1000 660L1040 670L1110 720L1080 790L1010 800L990 730ZM870 840L960 850L960 890L900 920L870 880Z" fill="#dbecc1" />
      </g>
      <g transform={ORIGIN.sw}>
        <path d="M650 90L700 60L760 45L810 70L870 40L910 70L890 110L850 150L840 200L760 215L690 235L650 210L660 160L625 130Z" fill="#9ecb92" />
        <path d="M720 90L800 80L860 110L800 160L740 150Z" fill="#bcd8ae" />
        <path d="M240 750L310 705L360 720L370 790L250 820ZM620 720L650 790L700 830L740 900L800 925" fill="none" stroke="#8fc08b" strokeWidth="9" opacity=".8" />
        <path d="M590 720L500 770L450 830L480 900L450 960L480 1000L485 1071" fill="none" stroke="#8fbf98" strokeWidth="16" opacity=".8" />
        <path d="M80 980L160 960L160 1071H60Z" fill="#c3dab6" />
      </g>
      <g transform={ORIGIN.ne}>
        <path d="M1400 930L1450 880L1495 870V1110H1460L1440 1000Z" fill="#a9d3a0" />
        <path d="M745 1040L800 1010L850 1050L800 1110H745Z" fill="#b5d0ac" />
      </g>

      {/* Water */}
      <g fill="#b1d1dc">
        <path d={SOUND} />
        <path d={OCEAN} />
        <path d="M962 1010L957 1047L948 1073L937 1120L923 1157L907 1183L887 1230L870 1270L855 1315L880 1312L890 1270L907 1227L920 1200L940 1160L957 1120L972 1053L985 1010Z" />
        <path d="M986 1487L1003 1463L1043 1447L1087 1467L1087 1487L1057 1513L1003 1530Z" />
        <path d="M1145 1470L1190 1465L1240 1440L1290 1430L1340 1432L1390 1435L1450 1440L1516 1415L1516 1460L1430 1490L1350 1510L1290 1515L1250 1515L1160 1512Z" />
        <path d="M1516 1380L1705 1370V1425L1516 1465ZM735 1350L755 1365L738 1400L725 1448L700 1455L690 1440L715 1420L722 1380Z" />
        <path d="M590 1640L600 1620L620 1632L640 1640L610 1676H595Z" />
      </g>
      <g transform={ORIGIN.nw} fill="#b1d1dc">
        <path d="M270 260L330 240L380 150L400 180L350 230L380 260L330 320L330 380L270 350L240 290ZM930 510L980 500L970 550L920 590ZM1370 170L1395 175L1395 220L1370 230ZM630 200L670 170L680 200L630 250Z" />
        <path d="M20 570L40 580V610L20 615ZM1080 1040L1110 1050L1100 1090L1060 1080Z" />
      </g>
      <path transform={ORIGIN.n} d="M460 250L530 195L560 205L500 250ZM210 900L260 890L250 990L210 980Z" fill="#b1d1dc" />
      <Lines data={streams} stroke="#a9cbd9" width={2} />
      <path d="M675 1458L735 1450L770 1446M675 1458L672 1520L660 1560L632 1580L622 1630" fill="none" stroke="#b1d1dc" strokeWidth="9" />

      {/* Land inside the bays */}
      <g transform={ORIGIN.ne}>
        <path d="M500 390L510 340L530 312L600 345L680 365L686 400L640 415L600 432L530 440Z" fill="#dfe8ca" />
        <path d="M530 380L560 345L640 360L660 385L600 400L540 410Z" fill="#c5dab6" />
        <path d="M765 285L795 280L830 340L870 380L920 405L860 380L810 400L760 400Z" fill="#d9dccb" />
        <path d="M768 290L795 285L815 330L800 350L770 330Z" fill="#c8e0b2" />
        <path d="M1455 232L1495 235V250L1480 250Z" fill="#d9dfc4" />
        <path d="M355 480L410 440L480 425L545 560L590 640L540 590L370 580Z" fill="#b1d1dc" />
        <path d="M390 545L395 520L420 500L425 450L445 430L460 455L440 490L435 545ZM460 560L465 515L500 508L520 550L500 575Z" fill="#dfead0" />
        <path d="M185 485L230 460L265 465L290 490L300 530M355 480L345 460L400 440L420 460L425 500L390 530L392 550L435 552L440 490L440 450L480 428L540 545L540 572L490 575M455 565L462 512L500 506L520 540" fill="none" stroke="#83bd96" strokeWidth="12" strokeLinejoin="round" opacity=".8" />
      </g>
      <path d="M930 1567L955 1560L1000 1545L1050 1528L1100 1515L1127 1517L1127 1524L1060 1533L1000 1553L955 1570L931 1580Z" fill="#efe9c6" />
      <path d="M1127 1519L1190 1522L1275 1524L1245 1530L1127 1530ZM1287 1540L1300 1523L1330 1518L1380 1508L1516 1462V1468L1380 1516ZM853 1669L865 1662L880 1676H858Z" fill="#f5ebc0" />
      <path d={wetlands} fill="#d7e8c3" />
      <path d="M986 1487L1003 1463L1043 1449L1083 1467L1080 1478L1088 1487L1057 1513L1003 1531Z" fill="#a9d2bd" fillOpacity=".25" stroke="#86bf98" strokeWidth="3" />
      <path d="M735 1575L750 1578L746 1595L738 1598L735 1590ZM1066 1480L1076 1474L1082 1488L1070 1495Z" fill="#d5e4bd" />
      <path d={marsh} stroke="#5d9fe0" strokeWidth="1.200" />

      <Lines data={ferries} stroke="#7d96ee" width={1.400} dash="6 5" opacity={0.85} />
      <Lines data={borders} stroke="#a48cae" width={1.700} opacity={0.85} />
      <Lines data={rails} stroke="#757575" width={1.400} opacity={0.85} />
      <Lines data={secondaries} stroke="#f3c482" width={2.200} />
      <Lines data={primaries} stroke="#f09a80" width={2.600} />
      <Lines data={motorways} stroke="#dc6c88" width={2.700} />

      <Plane x={597} y={1159} />
      <Plane x={462} y={1252} />
      <Plane x={701} y={1395} />
      <Plane x={996} y={1284} />
      <Plane x={1438} y={1341} />

      <g textAnchor="middle" fill="#3b3b3b" stroke="#fff" strokeOpacity={0.65} strokeWidth={2.600} paintOrder="stroke" strokeLinejoin="round">
        <g fontSize={14.300}>
          {towns.map(([name, x, y]) => (
            <text key={`${name}-${x}-${y}`} x={x * SHEET} y={y * SHEET + 4.500}>{name}</text>
          ))}
        </g>
        <g fontSize={17.400}>
          {cities.map(([name, x, y]) => (
            <text key={name} x={x * SHEET} y={y * SHEET + 5.500}>{name}</text>
          ))}
          <text x={864} y={1370}>New York</text>
          <text x={1703} y={1192} fontStyle="italic" fontSize={19}>L</text>
        </g>
        <g fill="#a678ae" fontSize={16.500}>
          <text x={992} y={1378}>City of New</text>
          <text x={992} y={1398}>York</text>
        </g>
        <g fill="#a678ae" fontSize={14} fontStyle="italic">
          <text x={915} y={1455}>Kings County</text>
          <text x={1074} y={1440}>Queens</text>
          <text x={1074} y={1456}>County</text>
          <text x={752} y={1546}>Richmond</text>
          <text x={752} y={1562}>County</text>
        </g>
        <g fill="#3b8a4b" fontSize={14} fontStyle="italic">
          <text x={1014} y={1480}>Jamaica</text>
          <text x={1014} y={1496}>Bay Wildlife</text>
          <text x={1014} y={1512}>Refuge</text>
        </g>
      </g>
      <Shield x={1012} y={1209} w={36} text="95" />
      <Shield x={939} y={1526} w={28} text="BP" />
      <Shield x={1319} y={1515} w={21} text="M" />

      <Dots data={bronxDots} fill="#ef8636" section="n" />
      <Dots data={queensDots.slice(0, 2)} fill="#c53a32" section="n" />
      <Dots data={queensDots.slice(2)} fill="#c53a32" section="s" />
      <Dots data={manhattanDots} fill="#519d3e" section="n" />
      <Dots data={brooklynSpecks} fill="#3b75af" section="s" />
      <Dots data={brooklynDots} fill="#3b75af" section="s" />
      <Dots data={[[589, 198, 38]]} fill="#519d3e" section="s" />
      <Dots data={[[311, 445, 54], [323, 514, 18]]} fill="#8d69b8" section="s" />
      <g transform={ORIGIN.s} fill="#d02c2c" stroke="#fff" strokeWidth="1.500">
        {[[1246, 194], [1315, 194], [1291, 217], [1180, 215], [1291, 314], [1279, 325], [1272, 338], [1330, 334]].map(([x, y]) => (
          <circle key={x + "-" + y} cx={x} cy={y} r={2.600} />
        ))}
      </g>
    </svg>
  );
}

const Chevron = ({ className = "" }: { className?: string }) => (
  <svg viewBox="0 0 18 10" className={`h-[10px] w-[18px] ${className}`} fill="none" stroke="currentColor" strokeWidth="1.800" strokeLinecap="round" strokeLinejoin="round">
    <path d="M1.500 1.200L9 8.600L16.500 1.200" />
  </svg>
);

function slice(cx: number, cy: number, r: number, from: number, to: number) {
  const p = (deg: number) => {
    const a = (deg * Math.PI) / 180;
    return `${(cx + r * Math.sin(a)).toFixed(2)} ${(cy - r * Math.cos(a)).toFixed(2)}`;
  };
  return `M${cx} ${cy}L${p(from)}A${r} ${r} 0 ${to - from > 180 ? 1 : 0} 1 ${p(to)}Z`;
}

type Slice = { label: string; color: string; end: number; width: number };

function Pie({ data }: { data: Slice[] }) {
  return (
    <svg viewBox="1 0 554 420" className="relative z-10 block h-[420px] w-[554px]" fontFamily="Inter, sans-serif">
      <text x="260" y="28.500" textAnchor="middle" fontSize="18.500" fontWeight="500" textLength="58">(2015)</text>
      {data.map((s, i) => (
        <path key={s.label} d={slice(260, 208.600, 172.500, i ? data[i - 1].end : 0, s.end)} fill={s.color} stroke="#fff" strokeWidth="2.300" strokeLinejoin="round" />
      ))}
      {data.map((s, i) => (
        <g key={s.label}>
          <rect x="446.300" y={62 + i * 26.700} width="13.700" height="13.700" fill={s.color} />
          <text x="467" y={76 + i * 26.500} fontSize="13.500" textLength={s.width}>{s.label}</text>
        </g>
      ))}
    </svg>
  );
}

const bars = [
  { name: "Bronx", top: 198.100 },
  { name: "Brooklyn", top: 132.700 },
  { name: "Manhattan", top: 35.400 },
  { name: "Queens", top: 293.800 },
  { name: "Staten Island", top: 315.200 },
];

function BarChart() {
  return (
    <svg viewBox="0 0 519 420" className="block h-[420px] w-[519px]" fontFamily='"Liberation Sans", Arial, sans-serif' fontSize="13.100" fill="#343a40">
      {bars.map((b, i) => (
        <rect key={b.name} x={115 + i * 71.050} y={b.top} width="57" height={328.500 - b.top} fill="#2450b2" />
      ))}
      <path d="M94 35.500H101V328.500H94M101 336V328.500H470.500V336" fill="none" stroke="#555a60" strokeWidth="1.500" />
      {Array.from({ length: 13 }, (_, i) => (
        <g key={i}>
          <path d={`M94 ${328.500 - i * 23.920}H101`} stroke="#444a50" strokeWidth="1.300" />
          <text x="89" y={333 - i * 23.920} textAnchor="end">{(i * 1000).toLocaleString("en-US")}</text>
        </g>
      ))}
      {bars.map((b, i) => (
        <g key={b.name}>
          <path d={`M${143.500 + i * 71.050} 328.500V336`} stroke="#444a50" strokeWidth="1.300" />
          <text transform={`translate(${158 + i * 71.050} 344.500) rotate(-45)`} textAnchor="end" fontSize="13.400">{b.name}</text>
        </g>
      ))}
      <text x="285.700" y="28.500" textAnchor="middle" fontFamily="Inter, sans-serif" fontSize="21" fontWeight="500" fill="#000" textLength="65">(2015)</text>
    </svg>
  );
}

function Card({ title, children }: { title: string; children: React.ReactNode }) {
  return (
    <section className="h-[515px] w-[519px] rounded-[19px] bg-white pt-[45px] shadow-[0_9px_28px_rgba(0,0,0,0.08)]">
      <h2 className="h-[40px] text-center text-[25px] leading-[40px] font-semibold tracking-[0.100px] whitespace-nowrap text-[#343a40]">{title}</h2>
      <div className="h-[420px]">{children}</div>
    </section>
  );
}

const legend = [
  ["Bronx", "bg-[#f4ab6f]"],
  ["Brooklyn", "bg-[#729cc6]"],
  ["Manhattan", "bg-[#83b977]"],
  ["Queens", "bg-[#d5716c]"],
  ["Staten Island", "bg-[#ad94cc]"],
];

export default function App() {
  return (
    <div className="h-[1808px] w-full overflow-hidden bg-[#f8f9fb] font-[Inter,sans-serif]">
      <div className="w-[1852px]">
        <header className="flex h-[185px] flex-col items-center bg-linear-to-br from-[#1a1a2e] to-[#1a1d3a] text-white">
          <h1 className="mt-[19px] h-[63px] text-[43.500px] leading-[63px] font-semibold tracking-[0.080px] whitespace-nowrap">NYC Affordable Housing Visual Analytics</h1>
          <div className="mt-[23px] flex h-[52px] w-[778px] items-start text-[18.500px] leading-[26px]">
            <div className="flex w-[142px] flex-col items-center">
              <span className="tracking-[0.700px]">Borough</span>
              <div className="mt-px flex h-[24px] w-[142px] items-center justify-between rounded-[1px] border border-[#767676] bg-white pr-[6px] pl-[5px] text-[16.800px] text-black">
                <span className="whitespace-nowrap">All Boroughs</span>
                <Chevron />
              </div>
            </div>
            <div className="ml-[21px] flex w-[179px] flex-col items-center">
              <span className="tracking-[0.450px] whitespace-nowrap">Construction Type</span>
              <div className="mt-px flex h-[24px] w-[179px] items-center justify-between rounded-[1px] border border-[#767676] bg-white pr-[6px] pl-[5px] text-[16.800px] text-black">
                <span>All Types</span>
                <Chevron />
              </div>
            </div>
            <div className="mt-[32px] ml-[25px] flex h-[20px] w-[132px] items-center">
              <span className="h-[20px] w-[20px] shrink-0 rounded-full bg-[#3375f6]" />
              <span className="-ml-[2px] h-[10px] flex-1 rounded-r-full border border-[#b5b5b5] bg-[#efefef]" />
            </div>
            <div className="ml-[18px] flex w-[132px] flex-col">
              <span className="tracking-[0.600px] whitespace-nowrap">Year Range</span>
              <div className="mt-[6px] flex h-[20px] items-center">
                <span className="-mr-[2px] h-[10px] flex-1 rounded-l-full border border-[#3c66b8] bg-[#3375f6]" />
                <span className="h-[20px] w-[20px] shrink-0 rounded-full bg-[#3375f6]" />
              </div>
            </div>
            <span className="mt-[30px] ml-[13px] text-[21px] tracking-[0.400px] whitespace-nowrap">2000-2025</span>
          </div>
        </header>

        <main className="ml-[126px] w-[1600px] pt-[42px]">
          <div className="flex justify-between">
            <Card title="Units by Borough">
              <BarChart />
            </Card>
            <Card title="Construction Type Distribution">
              <Pie
                data={[
                  { label: "Preservation", color: "#3b75af", end: 253.900, width: 82 },
                  { label: "New Construction", color: "#ef8636", end: 360, width: 117 },
                ]}
              />
            </Card>
            <Card title="Borough Distribution">
              <div className="w-[554px]">
                <Pie
                  data={[
                    { label: "Brooklyn", color: "#3b75af", end: 174.300, width: 56 },
                    { label: "Manhattan", color: "#ef8636", end: 256.500, width: 73 },
                    { label: "Bronx", color: "#519d3e", end: 316, width: 36 },
                    { label: "Queens", color: "#c53a32", end: 341.600, width: 51 },
                    { label: "Staten Island", color: "#8d69b8", end: 360, width: 86 },
                  ]}
                />
              </div>
            </Card>
          </div>

          <section className="mt-[22px] h-[132px] w-[373px] rounded-[10px] bg-white px-[20px] pt-[20px] shadow-[0_2px_5px_rgba(0,0,0,0.12)]">
            <h3 className="h-[30px] text-[21.500px] leading-[30px] font-semibold text-[#333]">Filter by Year</h3>
            <div className="mt-[13px] flex items-center justify-between text-[#333]">
              <button className="h-[48px] w-[48px] rounded-full border border-[#ddd] bg-[#efefef] text-[22px] font-bold">-</button>
              <div className="flex h-[49px] w-[122px] items-center justify-center rounded-[5px] border border-[#ddd] bg-white font-['Liberation_Sans',sans-serif] text-[21.500px]">2015</div>
              <button className="h-[48px] w-[48px] rounded-full border border-[#ddd] bg-[#efefef] text-[22px] font-bold">+</button>
            </div>
          </section>

          <section className="mt-[20px] h-[920px] w-[1600px] rounded-[19px] bg-white px-[21px] pt-[45px] shadow-[0_9px_28px_rgba(0,0,0,0.08)]">
            <h2 className="h-[48px] text-center text-[25px] leading-[40px] font-semibold tracking-[0.300px] text-[#343a40]">Geographic Distribution</h2>
            <div className="relative h-[666px] w-[1558px] overflow-hidden rounded-[19px]">
              <MapCanvas />
              <div className="absolute top-[15px] left-[15px] flex h-[83px] w-[42px] flex-col overflow-hidden rounded-[5px] border border-black/30 bg-white text-black">
                <div className="flex flex-1 items-center justify-center border-b border-[#ccc] pt-[7px]">
                  <svg viewBox="0 0 18 18" className="h-[18px] w-[18px]" stroke="currentColor" strokeWidth="2.400"><path d="M1 9H17M9 1V17" /></svg>
                </div>
                <div className="flex flex-1 items-center justify-center pt-[5px]">
                  <svg viewBox="0 0 18 18" className="h-[18px] w-[18px]" stroke="currentColor" strokeWidth="2.400"><path d="M1 9H17" /></svg>
                </div>
              </div>

              <div className="absolute top-[273px] left-[1369px] h-[359px] w-[175px] rounded-[19px] bg-white/92 px-[13px] pt-[10px] text-[#343a40] shadow-[0_4px_20px_rgba(0,0,0,0.1)]">
                <h4 className="h-[30px] text-[19px] leading-[30px] font-semibold tracking-[0.200px]">Borough</h4>
                <ul className="mt-[4px] text-[16px]">
                  {legend.map(([name, tint]) => (
                    <li key={name} className="mb-[4px] flex h-[20px] items-center gap-[7px] leading-[20px] whitespace-nowrap">
                      <span className={`h-[20px] w-[20px] ${tint}`} />
                      <span className="pt-[3px] tracking-[0.450px]">{name}</span>
                    </li>
                  ))}
                </ul>
                <h4 className="mt-[14px] h-[30px] text-[18px] leading-[30px] font-semibold tracking-[0.200px] whitespace-nowrap">Size: Total Units</h4>
                <div className="mt-[6px] flex h-[52px] items-center pl-[2px] text-[16px]">
                  <span className="h-[52px] w-[52px] rounded-full bg-[#80a8fa]" />
                  <span className="-mt-[2px] ml-[13px] tracking-[0.200px]">974 units</span>
                </div>
                <div className="mt-[8px] flex h-[36px] items-center pl-[2px] text-[16px]">
                  <span className="h-[36px] w-[36px] rounded-full bg-[#80a8fa]" />
                  <span className="-mt-[2px] ml-[13px] tracking-[0.200px]">487 units</span>
                </div>
                <div className="mt-[8px] flex h-[25px] items-center pl-[2px] text-[16px]">
                  <span className="h-[25px] w-[25px] rounded-full bg-[#80a8fa]" />
                  <span className="-mt-[3px] ml-[13px] tracking-[0.200px]">244 units</span>
                </div>
              </div>

              <div className="absolute right-0 bottom-0 flex h-[22px] w-[272px] items-center justify-center bg-white/75 font-['Liberation_Sans',sans-serif] text-[14.400px] tracking-[0.160px] whitespace-pre text-[#333]">
                <span className="text-[#0078a8]">Leaflet</span> | © <span className="text-[#0078a8]">OpenStreetMap</span> contributors
              </div>
            </div>

            <div className="mt-[24px] flex h-[93px] justify-center gap-[42px] rounded-[19px] bg-white pt-[9px] text-[#343a40] shadow-[0_5px_9px_rgba(0,0,0,0.1)]">
              <div className="flex w-[236px] flex-col items-center">
                <span className="h-[28px] text-[18px] leading-[28px] tracking-[0.500px]">Color By:</span>
                <div className="mt-px flex h-[44px] w-full items-center justify-between rounded-[5px] border border-[#ddd] bg-white pr-[6px] pl-[15px] text-[19.500px] text-black">
                  <span className="tracking-[0.500px]">Borough</span>
                  <Chevron />
                </div>
              </div>
              <div className="flex w-[324px] flex-col items-center">
                <span className="h-[28px] text-[18px] leading-[28px] tracking-[0.200px]">Size By:</span>
                <div className="mt-px flex h-[44px] w-full items-center justify-between rounded-[5px] border border-[#ddd] bg-white pr-[6px] pl-[15px] text-[19.500px] text-black">
                  <span>Total Units</span>
                  <Chevron />
                </div>
              </div>
            </div>
          </section>
        </main>
      </div>
    </div>
  );
}
